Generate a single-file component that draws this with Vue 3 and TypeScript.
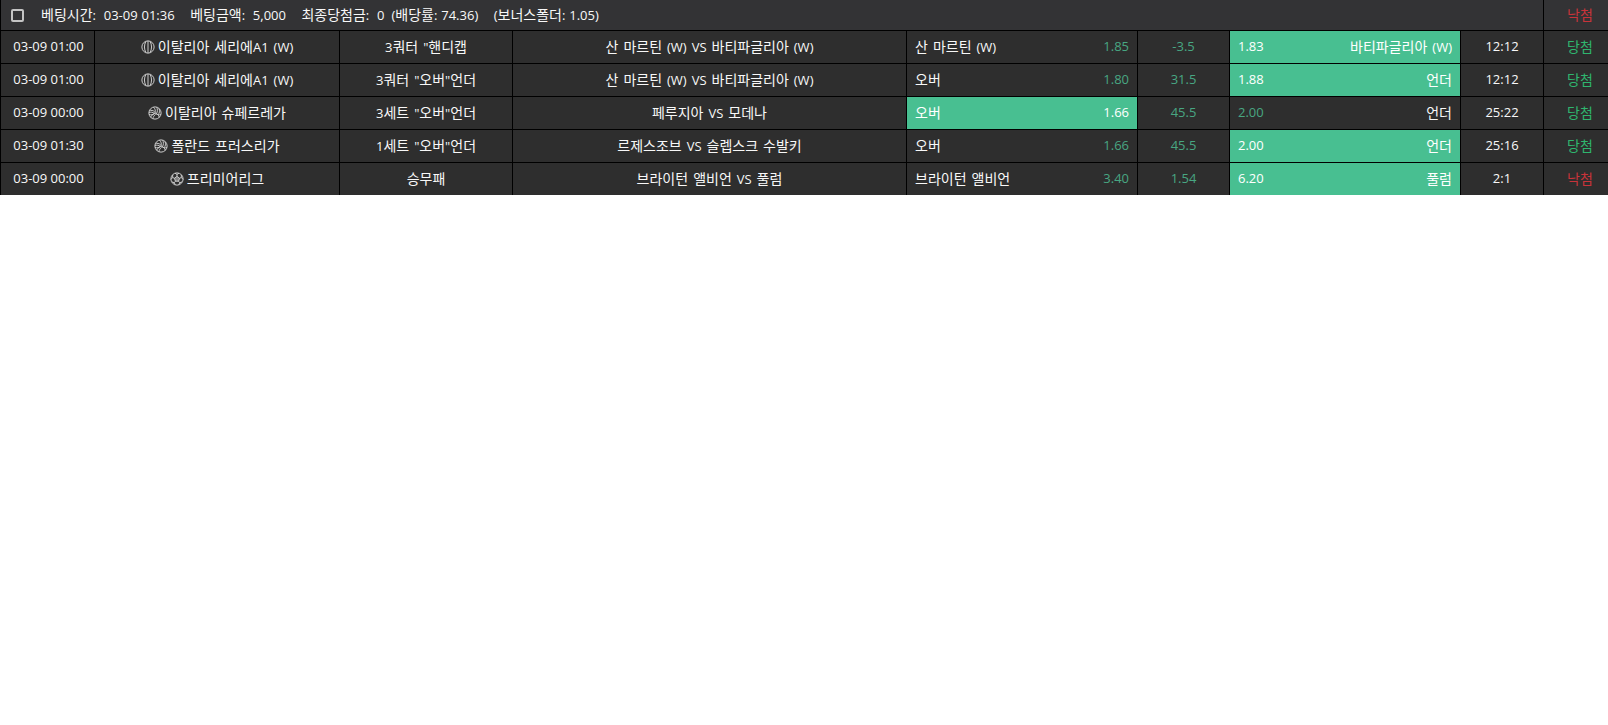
<script setup lang="ts">
interface Row {
  time: string; sport: 'basket' | 'volley' | 'soccer'; league: string; market: string; match: string;
  home: string; homeOdds: string; mid: string; awayOdds: string; away: string; score: string;
  pick: 'home' | 'away'; result: string; win: boolean;
}
const rows: Row[] = [
  { time: '03-09 01:00', sport: 'basket', league: '이탈리아 세리에A1 (W)', market: '3쿼터 "핸디캡', match: '산 마르틴 (W) VS 바티파글리아 (W)', home: '산 마르틴 (W)', homeOdds: '1.85', mid: '-3.5', awayOdds: '1.83', away: '바티파글리아 (W)', score: '12:12', pick: 'away', result: '당첨', win: true },
  { time: '03-09 01:00', sport: 'basket', league: '이탈리아 세리에A1 (W)', market: '3쿼터 "오버"언더', match: '산 마르틴 (W) VS 바티파글리아 (W)', home: '오버', homeOdds: '1.80', mid: '31.5', awayOdds: '1.88', away: '언더', score: '12:12', pick: 'away', result: '당첨', win: true },
  { time: '03-09 00:00', sport: 'volley', league: '이탈리아 슈페르레가', market: '3세트 "오버"언더', match: '페루지아 VS 모데나', home: '오버', homeOdds: '1.66', mid: '45.5', awayOdds: '2.00', away: '언더', score: '25:22', pick: 'home', result: '당첨', win: true },
  { time: '03-09 01:30', sport: 'volley', league: '폴란드 프러스리가', market: '1세트 "오버"언더', match: '르제스조브 VS 슬렙스크 수발키', home: '오버', homeOdds: '1.66', mid: '45.5', awayOdds: '2.00', away: '언더', score: '25:16', pick: 'away', result: '당첨', win: true },
  { time: '03-09 00:00', sport: 'soccer', league: '프리미어리그', market: '승무패', match: '브라이턴 앨비언 VS 풀럼', home: '브라이턴 앨비언', homeOdds: '3.40', mid: '1.54', awayOdds: '6.20', away: '풀럼', score: '2:1', pick: 'away', result: '낙첨', win: false }
];
function runs(text: string): { t: string; ko: boolean }[] {
  return (text.match(/[가-힣]+|[^가-힣]+/g) ?? []).map((t) => ({ t, ko: /[가-힣]/.test(t) }));
}
</script>

<template>
  <div class="board">
    <div class="summary">
      <div class="info">
        <span class="check"></span>
        <span class="item first"><span class="ko">베팅시간</span>:&nbsp; 03-09 01:36</span>
        <span class="item"><span class="ko">베팅금액</span>:&nbsp; 5,000</span>
        <span class="item"><span class="ko">최종당첨금</span>:&nbsp; 0</span>
        <span class="item tight">(<span class="ko">배당률</span>: 74.36)</span>
        <span class="item">(<span class="ko">보너스폴더</span>: 1.05)</span>
      </div>
      <div class="cell center status lose"><span class="ko">낙첨</span></div>
    </div>
    <div v-for="(r, i) in rows" :key="i" class="row">
      <div class="cell center time">{{ r.time }}</div>
      <div class="cell center league">
        <svg class="icon" viewBox="0 0 16 16" fill="none" stroke="currentColor" stroke-width="1.1">
          <circle cx="8" cy="8" r="7" />
          <template v-if="r.sport === 'basket'">
            <path d="M8 1V15" />
            <path d="M5.6 1.6C3.4 5.4 3.4 10.6 5.6 14.4" />
            <path d="M10.4 1.6C12.6 5.4 12.6 10.6 10.4 14.4" />
          </template>
          <template v-else-if="r.sport === 'volley'">
            <path d="M8 8C8.8 5.4 8.2 3 6.2 1.3" />
            <path d="M8 8C6 10 3.4 10.6 1.2 9.6" />
            <path d="M8 8C10.6 8.6 12.4 10.6 13 13" />
            <path d="M10 1.4C11 3.6 11 6.4 9.8 8.6" />
            <path d="M12.6 3C13.6 5.4 13.2 8 11.6 10" />
            <path d="M1.6 5.2C3.4 4.6 6 5 7.6 6.6" />
            <path d="M1.2 7.4C3 6.8 5.4 7 7 8.4" />
            <path d="M3.2 13C3.4 11.2 5.2 9.6 7.4 8.8" />
            <path d="M5.6 14.6C5.8 12.6 7 10.8 8.8 9.4" />
            <path d="M14.8 9.8C12.8 10.4 10.8 10 9 8.8" />
          </template>
          <template v-else>
            <path d="M8 5L10.9 7.1L9.8 10.5H6.2L5.1 7.1Z" fill="currentColor" fill-opacity=".5" />
            <path d="M8 5V2.8M10.9 7.1L13 6.4M9.8 10.5L11.1 12.3M6.2 10.5L4.9 12.3M5.1 7.1L3 6.4" />
            <path d="M5.7 1.4L8 2.8L10.3 1.4M12.9 3.2L13 6.4L14.9 8.4M13.8 11.2L11.1 12.3L10 14.6M6 14.6L4.9 12.3L2.2 11.2M1.1 8.4L3 6.4L3.1 3.2" />
          </template>
        </svg>
        <span><template v-for="(p, k) in runs(r.league)" :key="k"><span :class="p.ko ? 'ko' : 'lat'">{{ p.t }}</span></template></span>
      </div>
      <div class="cell center"><span><template v-for="(p, k) in runs(r.market)" :key="k"><span :class="p.ko ? 'ko' : 'lat'">{{ p.t }}</span></template></span></div>
      <div class="cell center"><span><template v-for="(p, k) in runs(r.match)" :key="k"><span :class="p.ko ? 'ko' : 'lat'">{{ p.t }}</span></template></span></div>
      <div class="cell odds" :class="{ picked: r.pick === 'home' }">
        <span><template v-for="(p, k) in runs(r.home)" :key="k"><span :class="p.ko ? 'ko' : 'lat'">{{ p.t }}</span></template></span>
        <span class="num">{{ r.homeOdds }}</span>
      </div>
      <div class="cell center num">{{ r.mid }}</div>
      <div class="cell odds" :class="{ picked: r.pick === 'away' }">
        <span class="num">{{ r.awayOdds }}</span>
        <span><template v-for="(p, k) in runs(r.away)" :key="k"><span :class="p.ko ? 'ko' : 'lat'">{{ p.t }}</span></template></span>
      </div>
      <div class="cell center">{{ r.score }}</div>
      <div class="cell center status" :class="r.win ? 'win' : 'lose'"><span class="ko">{{ r.result }}</span></div>
    </div>
  </div>
</template>

<style scoped>
.board {
  display: grid;
  gap: 1px;
  background: #000;
  padding-left: 1px;
  font-family: "Open Sans", "Noto Sans CJK KR", sans-serif;
  font-size: 13px;
  color: #f8f8f8;
}
.ko { font-size: 14px; font-family: "Noto Sans CJK KR", sans-serif; line-height: 18px; }
.lat { word-spacing: 1.6px; }
.summary {
  display: grid;
  grid-template-columns: 1fr 64px;
  gap: 1px;
  height: 30px;
}
.info {
  box-sizing: border-box;
  display: flex;
  align-items: center;
  background: #333335;
  padding: 0 0 2px 10px;
}
.check {
  box-sizing: border-box;
  width: 13px;
  height: 13px;
  border: 2px solid #c4c4c4;
  border-radius: 2px;
  margin-top: 2px;
}
.item { margin-left: 15.5px; white-space: nowrap; word-spacing: 0.5px; }
.item.first { margin-left: 17px; }
.item.tight { margin-left: 7px; }
.summary .cell { background: #333335; }
.row {
  display: grid;
  grid-template-columns: 93px 244px 172px 393px 230px 91px 230px 82px 64px;
  gap: 1px;
  height: 32px;
}
.cell {
  box-sizing: border-box;
  background: #2e2e2e;
  display: flex;
  align-items: center;
  white-space: pre;
  padding-bottom: 2px;
}
.center { justify-content: center; }
.time { padding-left: 2px; }
.status { padding-left: 8px; }
.league { gap: 3px; }
.icon { width: 14px; height: 14px; color: #d0d0d0; flex: none; margin-top: 2px; }
.odds {
  justify-content: space-between;
  padding: 0 8px 2px;
}
.num { color: #48a682; }
.picked { background: #48bf91; color: #fff; }
.picked .num { color: #fff; }
.win { color: #2fb56e; }
.lose { color: #c8333a; }
</style>

<style>
html, body { background: #fff; }
</style>
